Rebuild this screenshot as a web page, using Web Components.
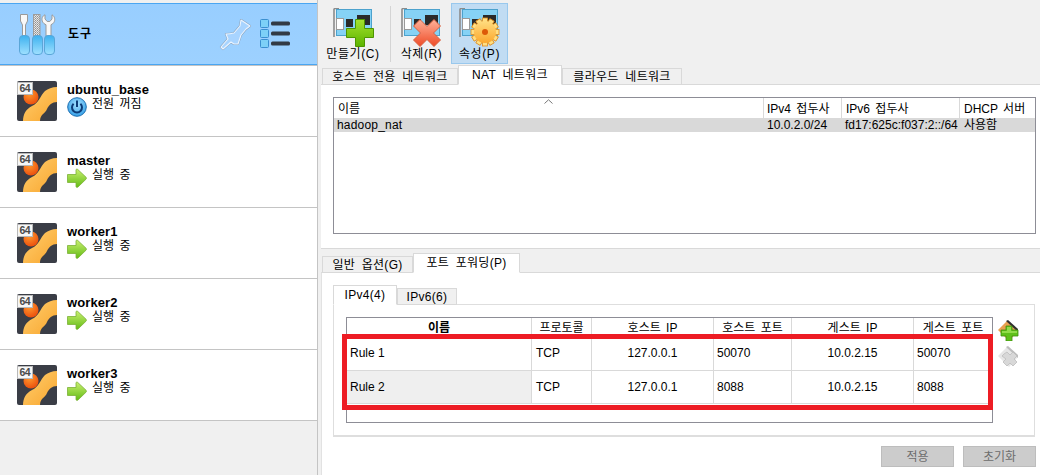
<!DOCTYPE html>
<html lang="ko"><head><meta charset="utf-8"><title>VirtualBox</title>
<style>
html,body{margin:0;height:100%;overflow:hidden;background:#f0f0f0;font:12px/14px "Liberation Sans","Noto Sans CJK KR",sans-serif;color:#000}
</style></head><body>
<vb-app>
  <vb-sidebar slot="side">
    <vb-tools-head slot="head"></vb-tools-head>
    <vb-vm name="ubuntu_base" state="off">전원 꺼짐</vb-vm>
    <vb-vm name="master" state="run">실행 중</vb-vm>
    <vb-vm name="worker1" state="run">실행 중</vb-vm>
    <vb-vm name="worker2" state="run">실행 중</vb-vm>
    <vb-vm name="worker3" state="run">실행 중</vb-vm>
  </vb-sidebar>
  <vb-main slot="main">
    <vb-toolbar>
      <vb-tool kind="add" style="width:56px">만들기(C)</vb-tool>
      <vb-sep></vb-sep>
      <vb-tool kind="del" style="margin-right:1px">삭제(R)</vb-tool>
      <vb-tool kind="prop" active>속성(P)</vb-tool>
    </vb-toolbar>
    <vb-tabs>
      <vb-tab w="136">호스트 전용 네트워크</vb-tab>
      <vb-tab w="104" active>NAT 네트워크</vb-tab>
      <vb-tab w="120">클라우드 네트워크</vb-tab>
    </vb-tabs>
    <vb-networks></vb-networks>
    <vb-tabs class="second">
      <vb-tab w="91">일반 옵션(G)</vb-tab>
      <vb-tab w="107" active>포트 포워딩(P)</vb-tab>
    </vb-tabs>
    <vb-ports></vb-ports>
  </vb-main>
</vb-app>
<script>
function el(name,css,html){
  customElements.define(name,class extends HTMLElement{
    constructor(){super();this.attachShadow({mode:'open'});}
    connectedCallback(){
      const h=typeof html==='function'?html(this):html;
      this.shadowRoot.innerHTML='<style>'+css+'</style>'+h;
      if(this.hasAttribute('w')) this.style.width=this.getAttribute('w')+'px';
    }
  });
}
let uid=0;
const vmIcon=()=>{const a='g'+(++uid),b='g'+(++uid);return `<svg width="40" height="40" viewBox="0 0 40 40" aria-hidden="true">
<defs><linearGradient id="${a}" x1="0" y1="0" x2="1" y2="1"><stop offset="0" stop-color="#ffcf70"/><stop offset="1" stop-color="#f9a62e"/></linearGradient>
<radialGradient id="${b}" cx=".4" cy=".3" r=".8"><stop offset="0" stop-color="#ff9a2e"/><stop offset="1" stop-color="#e8460a"/></radialGradient></defs>
<rect width="40" height="40" rx="2" fill="#3a3d46"/>
<path d="M6 40C6 33 9 28 15 25 22 22 23 15 28 10 31 8 35 6 40 6V21C35 21 32 24 30 28 28 33 23 33 23 40Z" fill="url(#${a})"/>
<circle cx="14" cy="16" r="7.500" fill="url(#${b})"/>
<rect x=".5" y="1.500" width="15" height="12" fill="#f6f6f6" stroke="#b9b9b9"/>
<text x="8" y="11" font-family="Liberation Sans" font-weight="700" font-size="10.500" fill="#4a4a4a" text-anchor="middle" textLength="11">64</text></svg>`};
const powerIcon=`<svg width="20" height="20" viewBox="0 0 20 20" aria-hidden="true"><defs><radialGradient id="pw" cx=".5" cy=".35" r=".7"><stop offset="0" stop-color="#a4e0ff"/><stop offset="1" stop-color="#2c9be6"/></radialGradient></defs>
<circle cx="10" cy="10" r="9.300" fill="url(#pw)" stroke="#1f6fb0"/><path d="M6.600 6.800A5 5 0 1 0 13.400 6.800" fill="none" stroke="#0c3c78" stroke-width="2"/><path d="M10 3.600V10" stroke="#0c3c78" stroke-width="2"/></svg>`;
const runIcon=`<svg width="20" height="20" viewBox="0 0 20 20" aria-hidden="true"><defs><linearGradient id="rn" x1="0" y1="0" x2="0" y2="1"><stop offset="0" stop-color="#c9f070"/><stop offset="1" stop-color="#62bb14"/></linearGradient></defs>
<path d="M.5 6.500H9V2C9 1 10 .8 10.800 1.500L19 9.200C19.600 9.800 19.600 10.600 19 11.200L11 19C10 19.800 9 19.400 9 18.300V14.500H.5Z" fill="url(#rn)" stroke="#7bb036" stroke-width=".8"/></svg>`;
const board=`<path d="M1 .5H6M1 .5V29" fill="none" stroke="#8c8c8c" stroke-width="1.600"/>
<rect x="3.500" y="1.500" width="35" height="26" fill="#86d2f5" stroke="#4ca2cd"/>
<rect x="3.500" y="10.500" width="7" height="11" fill="#fff" stroke="#9a9a9a"/>
<rect x="13" y="11" width="7" height="8" fill="#2a2a2a"/><rect x="24" y="7" width="13" height="10" fill="#2a2a2a"/>`;
function netIcon(k){
  const id='n'+(++uid);
  let over='';
  if(k==='add') over=`<defs><linearGradient id="${id}" x1="0" y1="0" x2="0" y2="1"><stop offset="0" stop-color="#a4e22e"/><stop offset="1" stop-color="#5cb300"/></linearGradient></defs>
  <path d="M22.500 11.500H31.500V20.500H40.500V29.500H31.500V38.500H22.500V29.500H13.500V20.500H22.500Z" fill="url(#${id})" stroke="#4d9400"/>`;
  if(k==='del') over=`<defs><linearGradient id="${id}" x1="0" y1="0" x2="0" y2="1"><stop offset="0" stop-color="#ffb29a"/><stop offset="1" stop-color="#ee4b26"/></linearGradient></defs>
  <path d="M19 11.500 26 18.500 33 11.500 39.500 18 32.500 25 39.500 32 33 38.500 26 31.500 19 38.500 12.500 32 19.500 25 12.500 18Z" fill="url(#${id})" stroke="#d8613f"/>`;
  if(k==='prop'){let t='';for(let i=0;i<12;i++){t+=`<rect x="23.500" y="10" width="5" height="6" fill="url(#${id})" stroke="#e08a18" stroke-width=".8" transform="rotate(${i*30} 26 24)"/>`}
   over=`<defs><linearGradient id="${id}" gradientUnits="userSpaceOnUse" x1="0" y1="10" x2="0" y2="38"><stop offset="0" stop-color="#ffe38a"/><stop offset="1" stop-color="#fba122"/></linearGradient></defs>${t}
   <circle cx="26" cy="24" r="11" fill="url(#${id})"/><circle cx="26" cy="24" r="3" fill="#dd5a08"/>`;}
  return `<svg width="41" height="39" viewBox="0 0 41 39" aria-hidden="true">${board}${over}</svg>`;
}
const toolsIcon=`<svg width="38" height="41" viewBox="0 0 38 41" aria-hidden="true"><defs><linearGradient id="hd" x1="0" y1="0" x2="0" y2="1"><stop offset="0" stop-color="#3db1ef"/><stop offset="1" stop-color="#9fe0ff"/></linearGradient>
<pattern id="fl" width="2" height="2" patternUnits="userSpaceOnUse"><rect width="2" height="2" fill="#e6e6e6"/><rect width="1" height="1" fill="#8f8f8f"/><rect x="1" y="1" width="1" height="1" fill="#a9a9a9"/></pattern></defs>
<path d="M1.500.5H8.500V7L6.500 11V22H3.500V11L1.500 7Z" fill="#f8f8f8" stroke="#9a9a9a"/>
<rect x="14.500" y=".5" width="6.500" height="22" fill="url(#fl)" stroke="#9c9c9c"/>
<path d="M26 .8V5L28.200 7.500H30.800L33 5V.8C35.800 2.300 36.500 6 34.800 8.500 34 9.700 33 10.300 32 10.700V22H27V10.700C24 9.700 22.300 6.500 23.300 3.500 23.700 2.300 24.700 1.400 26 .8Z" fill="#f8f8f8" stroke="#9a9a9a"/>
<rect x=".5" y="21.500" width="10" height="19" rx="3.500" fill="url(#hd)" stroke="#5aa6d8"/>
<rect x="13.500" y="21.500" width="10" height="19" rx="3.500" fill="url(#hd)" stroke="#5aa6d8"/>
<rect x="25.500" y="21.500" width="10" height="19" rx="3.500" fill="url(#hd)" stroke="#5aa6d8"/></svg>`;
const pinD="M2 28 9 20 7 15Q11 15 15 14L21 7 22 1 31 7 27 10 22 16 19 25 15 25 12 23 4 30Z";
const pinIcon=`<svg width="32" height="32" viewBox="0 0 32 32" aria-hidden="true"><path d="${pinD}" fill="#a8d4ff" stroke="#8ba6c2" stroke-width="2.200" stroke-linejoin="round"/><path d="${pinD}" fill="#a8d4ff" stroke="#eaf4ff" stroke-width="1.100" stroke-linejoin="round"/></svg>`;
const listIcon=`<svg width="31" height="30" viewBox="0 0 31 30" aria-hidden="true"><g fill="#7dd0f7" stroke="#3b8fd0"><rect x=".5" y=".5" width="8" height="8" rx="1"/><rect x=".5" y="10.500" width="8" height="8" rx="1"/><rect x=".5" y="20.500" width="8" height="8" rx="1"/></g><g fill="#333a44"><rect x="11" y="2.500" width="19" height="4" rx="1.500"/><rect x="11" y="12.500" width="19" height="4" rx="1.500"/><rect x="11" y="22.500" width="19" height="4" rx="1.500"/></g></svg>`;
const portAdd=`<svg width="21" height="21" viewBox="0 0 21 21" aria-hidden="true"><path d="M0 10 9 1 20 11 11 21Z" fill="#e8a050"/><path d="M8 1 10 0 20 9 20 12Z" fill="#2f2f2f"/><path d="M8 6H14V10H20V16H14V21H8V16H3V10H8Z" fill="#5fc01a" stroke="#3f8f10" stroke-width=".8"/><path d="M9 7H13V11H19V13H4V11H9Z" fill="#a6e860" opacity=".7"/></svg>`;
const portDel=`<svg width="21" height="21" viewBox="0 0 21 21" aria-hidden="true"><path d="M0 10 9 1 20 11 11 21Z" fill="#e6e6e6"/><path d="M8 1 10 0 20 9 20 12Z" fill="#bdbdbd"/><path d="M6 8 9 6 12 9 15 6 19 10 16 13 19 16 15 20 12 17 9 20 5 16 8 13 4 10Z" fill="#d8d8d8" stroke="#bcbcbc" stroke-width=".8"/></svg>`;

el('vb-app',':host{display:flex;width:1040px;height:475px}',
 '<slot name="side"></slot><slot name="main"></slot>');
el('vb-sidebar',':host{display:flex;flex-direction:column;width:317px;border-right:1px solid #c4c4c4;padding-top:3px;height:472px;flex:none;margin-right:3px}',
 '<slot name="head"></slot><slot></slot>');
el('vb-tools-head',`:host{display:flex;align-items:center;height:60px;margin-bottom:1px;border-top:1px solid #4aa6f2;border-bottom:1px solid #4aa6f2;background:linear-gradient(#98ceff,#9dd1ff);box-shadow:0 1px 0 #c4c4c4;padding-left:19px}
 b{font-size:12px;margin-left:11px;flex:1;letter-spacing:1px}
 svg{display:block} .p{margin-right:9px;margin-top:1px}.l{margin-right:26px}`,
 `${toolsIcon}<b>도구</b><span class="p">${pinIcon}</span><span class="l">${listIcon}</span>`);
el('vb-vm',`:host{display:flex;border-bottom:1px solid #c4c4c4;background:#fff;padding:15px 0 0 17px;box-sizing:border-box;height:71px}
 .t{margin:2px 0 0 10px;display:flex;flex-direction:column}
 b{font-size:13px;line-height:14px;letter-spacing:.1px}
 .s{display:flex;gap:5px;line-height:14px}
 svg{display:block;flex:none}
 .s span{word-spacing:2px}`,
 h=>`${vmIcon()}<div class="t"><b>${h.getAttribute('name')}</b><div class="s">${h.getAttribute('state')==='off'?powerIcon:runIcon}<span><slot></slot></span></div></div>`);
el('vb-main',':host{display:flex;flex-direction:column;flex:1;min-width:0}','<slot></slot>');
el('vb-toolbar',':host{display:flex;height:65px;box-sizing:border-box;padding:3px 0 1px 4px}','<slot></slot>');
el('vb-sep',':host{display:block;width:1px;height:56px;margin:3px 2px 0 9px;background:#d4d4d4}','');
el('vb-tool',`:host{display:flex;flex-direction:column;align-items:center;width:57px;box-sizing:border-box;border:1px solid transparent;height:61px;padding-top:4px;white-space:nowrap;letter-spacing:.6px}
 :host([active]){background:#c1dcf3;border-color:#99c8ed}
 svg{display:block}
 .x{line-height:14px}`,
 h=>`<div>${netIcon(h.getAttribute('kind'))}</div><div class="x"><slot></slot></div>`);
el('vb-tabs',`:host{display:flex;align-items:flex-end;height:20px;padding-left:1px;margin-bottom:-1px;position:relative;z-index:1}
 :host(.second){margin-top:4px}`,'<slot></slot>');
el('vb-tab',`:host{display:flex;align-items:center;justify-content:center;box-sizing:border-box;height:17px;background:#f0f0f0;border:1px solid #d9d9d9;word-spacing:3px;letter-spacing:.3px;white-space:nowrap}
 :host([active]){height:20px;background:#fff;border-bottom-color:#fff}`,
 '<slot></slot>');
el('vb-cell',`:host{display:flex;align-items:center;box-sizing:border-box;min-width:0;white-space:nowrap;border-right:1px solid #d9d9d9;border-bottom:1px solid #d9d9d9;padding:0 3px;position:relative}
 :host([c]){justify-content:center}
 :host([h]){border-bottom:0;padding-top:1px;word-spacing:2px}
 :host([nb]){border-right:0}
 :host([alt]){background:#efefef}
 :host([sel]){background:#d9d9d9;border:0}
 b{font-weight:700}
 svg{position:absolute;left:210px;top:1px}`,
 h=>h.hasAttribute('arrow')?'<slot></slot><svg width="9" height="5" viewBox="0 0 9 5" aria-hidden="true"><path d="M.5 4.500 4.500 .8 8.500 4.500" fill="none" stroke="#777"/></svg>':'<slot></slot>');
el('vb-networks',`:host{display:block;height:165px;box-sizing:border-box;background:#fff;border-top:1px solid #d9d9d9;border-bottom:1px solid #d9d9d9;padding:12px 4px 0 12px}
 .t{display:grid;grid-template-columns:430px 78px 118px 75px;grid-template-rows:20px 14px;height:137px;box-sizing:border-box;border:1px solid #8d8d96}`,
 `<div class="t">
 <vb-cell h arrow style="padding-left:4px">이름</vb-cell><vb-cell h>IPv4 접두사</vb-cell><vb-cell h style="padding-left:4px">IPv6 접두사</vb-cell><vb-cell h nb style="padding-left:4px">DHCP 서버</vb-cell>
 <vb-cell sel style="letter-spacing:.2px">hadoop_nat</vb-cell><vb-cell sel>10.0.2.0/24</vb-cell><vb-cell sel>fd17:625c:f037:2::/64</vb-cell><vb-cell sel style="padding-left:4px">사용함</vb-cell>
 </div>`);
el('vb-ports',`:host{display:block;flex:1;background:#fff;border-top:1px solid #d9d9d9;border-left:1px solid #e2e2e2;padding:12px 4px 0 11px}
 .tabs{display:flex;align-items:flex-end;height:20px;margin-bottom:-1px;position:relative;z-index:1}
 .box{display:flex;gap:5px;width:702px;height:133px;box-sizing:border-box;border:1px solid #dedede;border-bottom-width:2px;padding:12px 0 0 12px}
 .wrap{position:relative;width:647px;height:106px;flex:none}
 .t{display:grid;grid-template-columns:185px 60px 122px 78px 122px 78px;grid-template-rows:18px 35px 33px;height:106px;box-sizing:border-box;border:1px solid #8d8d96}
 .red{position:absolute;left:-4px;top:17px;width:651px;height:76px;box-sizing:border-box;border:5px solid #ed1c24;pointer-events:none}
 .side{display:flex;flex-direction:column;gap:5px;padding-top:3px}
 .side svg{display:block}
 .btns{display:flex;justify-content:flex-end;gap:9px;margin-top:9px;width:703px}
 button{font:inherit;width:73px;height:21px;padding:0;background:#ccc;border:1px solid #bdbdbd;color:#6d6d6d}`,
 `<div class="tabs"><vb-tab w="64" active>IPv4(4)</vb-tab><vb-tab w="60">IPv6(6)</vb-tab></div>
 <div class="box"><div class="wrap"><div class="t">
 <vb-cell h c><b>이름</b></vb-cell><vb-cell h c>프로토콜</vb-cell><vb-cell h c>호스트 IP</vb-cell><vb-cell h c>호스트 포트</vb-cell><vb-cell h c>게스트 IP</vb-cell><vb-cell h c nb>게스트 포트</vb-cell>
 <vb-cell>Rule 1</vb-cell><vb-cell style="padding-left:4px">TCP</vb-cell><vb-cell c>127.0.0.1</vb-cell><vb-cell>50070</vb-cell><vb-cell c>10.0.2.15</vb-cell><vb-cell nb>50070</vb-cell>
 <vb-cell alt>Rule 2</vb-cell><vb-cell style="padding-left:4px">TCP</vb-cell><vb-cell c>127.0.0.1</vb-cell><vb-cell>8088</vb-cell><vb-cell c>10.0.2.15</vb-cell><vb-cell nb>8088</vb-cell>
 </div><div class="red"></div></div>
 <div class="side">${portAdd}${portDel}</div></div>
 <div class="btns"><button disabled>적용</button><button disabled>초기화</button></div>`);
</script>
</body></html>
